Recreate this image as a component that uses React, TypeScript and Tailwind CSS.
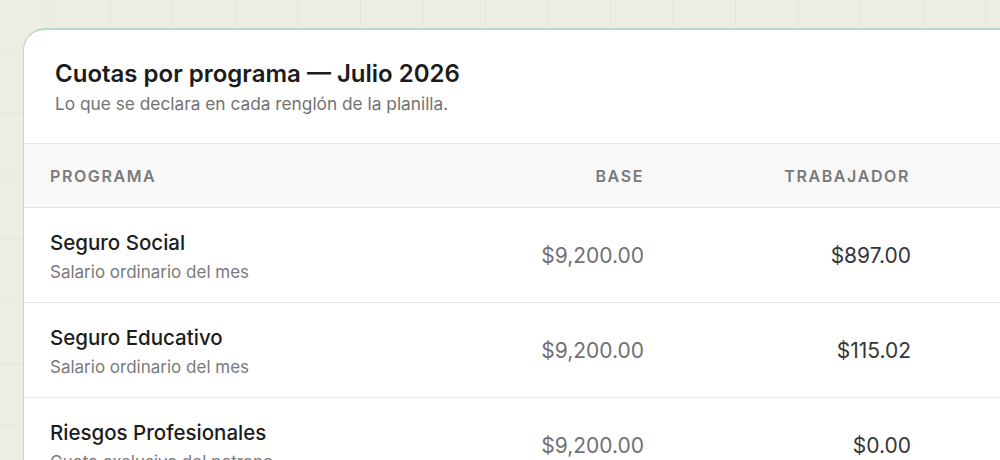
const rows = [
  { name: 'Seguro Social', note: 'Salario ordinario del mes', base: '$9,200.00', worker: '$897.00' },
  { name: 'Seguro Educativo', note: 'Salario ordinario del mes', base: '$9,200.00', worker: '$115.02' },
  { name: 'Riesgos Profesionales', note: 'Cuota exclusiva del patrono', base: '$9,200.00', worker: '$0.00' },
];

export default function App() {
  return (
    <div className="h-[460px] w-[1000px] overflow-hidden bg-[#eceee4] bg-[linear-gradient(to_right,#e2e5da_1px,transparent_1px),linear-gradient(to_bottom,#e2e5da_1px,transparent_1px)] bg-[size:62.5px_62.5px] bg-[position:-15px_-12px] pl-[23px] pt-[28px] font-['Inter',sans-serif]">
      <div className="w-[1100px] overflow-hidden rounded-tl-[22px] border-l border-t-2 border-[#b7dbc3] bg-white">
        {/* Heading */}
        <div className="border-b border-[#e6e6e6] pb-[27px] pl-[31px] pr-8 pt-[29px]">
          <h2 className="text-[24px] font-semibold leading-[30px] text-[#1c1c1c]">Cuotas por programa — Julio 2026</h2>
          <p className="mt-[3px] text-[17.3px] leading-6 text-[#727272]">Lo que se declara en cada renglón de la planilla.</p>
        </div>

        {/* Column headers */}
        <div className="grid h-[64px] grid-cols-[379px_267px_267px_187px] items-center border-b border-[#e6e6e6] bg-[#f8f8f8] text-[16px] font-semibold tracking-[0.1em] text-[#7a7a7a]">
          <div className="pl-[26px]">PROGRAMA</div>
          <div className="pr-[26px] text-right">BASE</div>
          <div className="pr-[27px] text-right">TRABAJADOR</div>
          <div />
        </div>

        {/* Rows */}
        {rows.map((r) => (
          <div
            key={r.name}
            className="grid h-[95px] grid-cols-[379px_267px_267px_187px] items-center border-b border-[#e6e6e6] pt-[2px]"
          >
            <div className="pl-[26px]">
              <div className="text-[20.5px] font-medium leading-[26px] text-[#1c1c1c]">{r.name}</div>
              <div className="mt-[5px] text-[17px] leading-[22px] text-[#7a7a7a]">{r.note}</div>
            </div>
            <div className="pr-[26px] text-right text-[21px] text-[#717171]">{r.base}</div>
            <div className="pr-[26px] text-right text-[21px] text-[#363636]">{r.worker}</div>
            <div />
          </div>
        ))}
      </div>
    </div>
  );
}
